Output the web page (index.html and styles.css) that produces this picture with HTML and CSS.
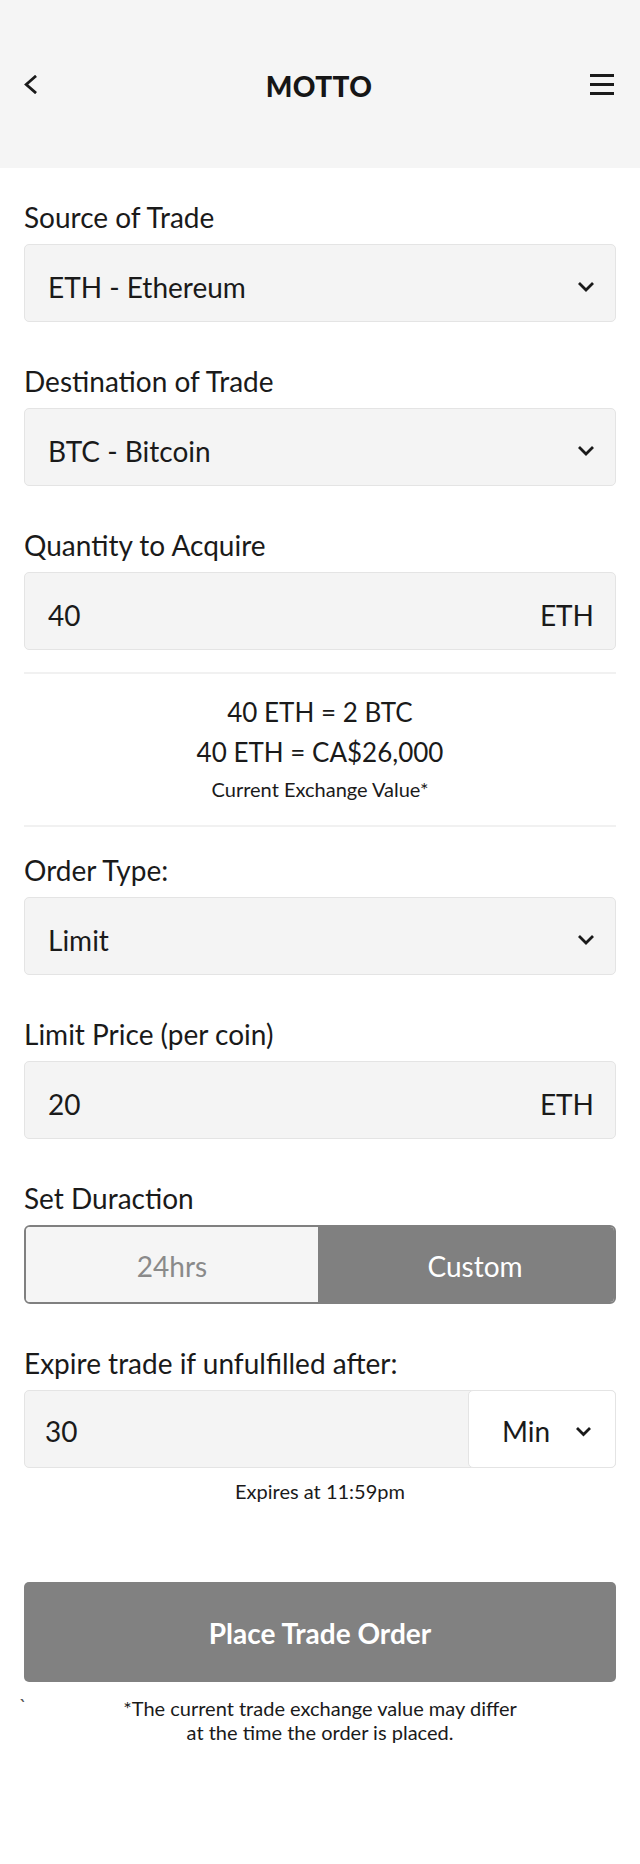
FILE: index.html
```html
<!DOCTYPE html>
<html lang="en">
<head>
<meta charset="utf-8">
<title>MOTTO - Trade</title>
<link rel="stylesheet" href="styles.css">
</head>
<body>
<header class="topbar">
  <button class="icon-btn back" aria-label="Back">
    <svg width="13" height="19" viewBox="0 0 13 19"><polyline points="11,1.8 2.2,9.5 11,17.2" fill="none" stroke="#1a1a1a" stroke-width="2.8" stroke-linecap="square"/></svg>
  </button>
  <div class="brand">MOTTO</div>
  <button class="icon-btn menu" aria-label="Menu">
    <svg width="24" height="21" viewBox="0 0 24 21"><rect x="0" y="0" width="24" height="3" fill="#1a1a1a"/><rect x="0" y="9" width="24" height="3" fill="#1a1a1a"/><rect x="0" y="18" width="24" height="3" fill="#1a1a1a"/></svg>
  </button>
</header>

<main class="content">
  <section class="field">
    <div class="label">Source of Trade</div>
    <div class="box select">
      <span class="value">ETH - Ethereum</span>
      <svg class="chev" width="18" height="12" viewBox="0 0 18 12"><polyline points="2,2 9,9 16,2" fill="none" stroke="#1a1a1a" stroke-width="2.8"/></svg>
    </div>
  </section>

  <section class="field">
    <div class="label">Destination of Trade</div>
    <div class="box select">
      <span class="value">BTC - Bitcoin</span>
      <svg class="chev" width="18" height="12" viewBox="0 0 18 12"><polyline points="2,2 9,9 16,2" fill="none" stroke="#1a1a1a" stroke-width="2.8"/></svg>
    </div>
  </section>

  <section class="field last">
    <div class="label">Quantity to Acquire</div>
    <div class="box select">
      <span class="value">40</span>
      <span class="unit">ETH</span>
    </div>
  </section>

  <div class="exchange">
    <div class="rate">40 ETH = 2 BTC</div>
    <div class="rate">40 ETH = CA$26,000</div>
    <div class="note">Current Exchange Value*</div>
  </div>

  <section class="field">
    <div class="label">Order Type:</div>
    <div class="box select">
      <span class="value">Limit</span>
      <svg class="chev" width="18" height="12" viewBox="0 0 18 12"><polyline points="2,2 9,9 16,2" fill="none" stroke="#1a1a1a" stroke-width="2.8"/></svg>
    </div>
  </section>

  <section class="field">
    <div class="label">Limit Price (per coin)</div>
    <div class="box select">
      <span class="value">20</span>
      <span class="unit">ETH</span>
    </div>
  </section>

  <section class="field">
    <div class="label">Set Duraction</div>
    <div class="toggle">
      <div class="seg">24hrs</div>
      <div class="seg active">Custom</div>
    </div>
  </section>

  <section class="field tight">
    <div class="label">Expire trade if unfulfilled after:</div>
    <div class="group">
      <div class="group-input">30</div>
      <div class="group-select">
        <span>Min</span>
        <svg class="chev" width="17" height="11" viewBox="0 0 17 11"><polyline points="2,2 8.5,8.5 15,2" fill="none" stroke="#1a1a1a" stroke-width="2.8"/></svg>
      </div>
    </div>
    <div class="expires">Expires at 11:59pm</div>
  </section>

  <button class="submit">Place Trade Order</button>

  <div class="footnote">
    <span class="tick">`</span>
    <p>*The current trade exchange value may differ<br>at the time the order is placed.</p>
  </div>
</main>
</body>
</html>
```

FILE: styles.css
```css
* { box-sizing: border-box; }

body {
  margin: 0;
  background: #ffffff;
  color: #1a1a1a;
  font-family: "Lato", "Open Sans", "Liberation Sans", sans-serif;
}

.topbar {
  height: 168px;
  background: #f5f5f5;
  display: grid;
  grid-template-columns: 1fr auto 1fr;
  align-items: center;
  padding: 0 26px 0 24px;
}

.icon-btn {
  background: none;
  border: 0;
  padding: 0;
  display: flex;
  line-height: 0;
}

.back { justify-self: start; }
.menu { justify-self: end; }

.brand {
  font-size: 28px;
  font-weight: 900;
  line-height: 34px;
  letter-spacing: 0.4px;
  color: #161616;
  padding-top: 3px;
}

.content {
  padding: 32px 24px 0;
}

.field {
  margin-bottom: 42px;
}

.field.last {
  margin-bottom: 22px;
}

.field.tight {
  margin-bottom: 0;
}

.label {
  font-size: 28px;
  line-height: 34px;
  margin-bottom: 10px;
}

.box {
  height: 78px;
  background: #f4f4f4;
  border: 1px solid #e4e4e4;
  border-radius: 5px;
  padding: 25px 20px 17px 23px;
  display: flex;
  align-items: center;
  justify-content: space-between;
  font-size: 28px;
  line-height: 34px;
}

.unit {
  margin-right: 1px;
}

.exchange {
  border-top: 2px solid #f1f1f1;
  border-bottom: 2px solid #f1f1f1;
  padding: 18px 0 19px;
  text-align: center;
  margin-bottom: 26px;
}

.rate {
  font-size: 26px;
  line-height: 40px;
}

.note {
  font-size: 20px;
  line-height: 34px;
}

.toggle {
  height: 79px;
  border: 2px solid #808080;
  border-radius: 6px;
  overflow: hidden;
  display: grid;
  grid-template-columns: 292px 1fr;
}

.seg {
  display: flex;
  align-items: center;
  justify-content: center;
  font-size: 28px;
  line-height: 34px;
  background: #f5f5f5;
  color: #8a8a8a;
  padding-top: 2px;
}

.seg.active {
  background: #808080;
  color: #ffffff;
  padding-left: 18px;
}

.group {
  height: 78px;
  display: flex;
  background: #f4f4f4;
  border: 1px solid #e4e4e4;
  border-radius: 5px;
  font-size: 28px;
  line-height: 34px;
}

.group-input {
  flex: 1;
  display: flex;
  align-items: center;
  padding: 4px 20px 0;
}

.group-select {
  width: 148px;
  margin: -1px -1px -1px 0;
  background: #ffffff;
  border: 1px solid #e4e4e4;
  border-radius: 5px;
  display: flex;
  align-items: center;
  justify-content: space-between;
  padding: 4px 23px 0 33px;
}

.expires {
  margin-top: 11px;
  font-size: 20px;
  line-height: 24px;
  text-align: center;
}

.submit {
  display: flex;
  align-items: center;
  justify-content: center;
  width: 100%;
  height: 100px;
  margin-top: 79px;
  border: 0;
  border-radius: 5px;
  background: #818181;
  color: #ffffff;
  font-family: inherit;
  font-size: 28px;
  font-weight: 700;
  padding: 2px 0 0;
}

.footnote {
  position: relative;
  margin-top: 14px;
}

.tick {
  position: absolute;
  left: -5px;
  top: -3px;
  font-size: 20px;
  line-height: 24px;
  color: #555;
}

.footnote p {
  margin: 0;
  font-size: 20px;
  line-height: 24px;
  text-align: center;
}
```
